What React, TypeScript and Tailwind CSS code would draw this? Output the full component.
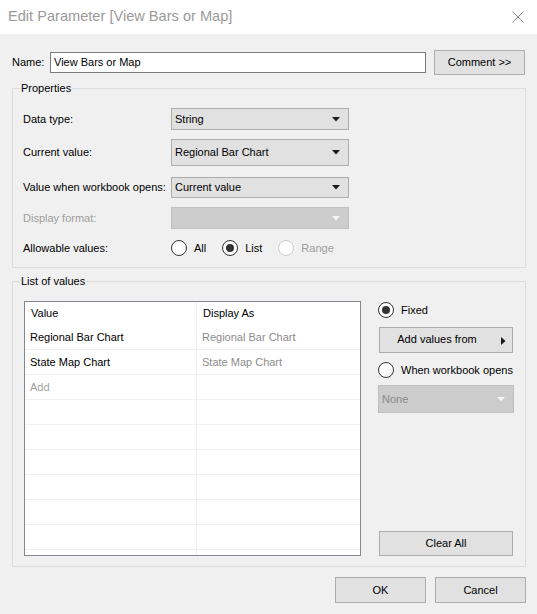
import React from 'react';

const font = { fontFamily: '"Liberation Sans", Arial, sans-serif' };

function Arrow({ disabled = false }: { disabled?: boolean }) {
  return (
    <svg width="8" height="5" viewBox="0 0 8 5" className="shrink-0">
      <path d="M0 0H8L4 4.5Z" fill={disabled ? '#f4f4f4' : '#1b1b1b'} />
    </svg>
  );
}

function Select({ value, h, disabled = false, w = 'w-[178px]' }: { value?: string; h: string; disabled?: boolean; w?: string }) {
  return (
    <div
      className={`${w} ${h} flex items-center justify-between pl-[3px] pr-[8px] border ${
        disabled ? 'bg-[#cccccc] border-[#bfbfbf] text-[#8a8a8a]' : 'bg-[#e1e1e1] border-[#adadad] text-black'
      }`}
    >
      <span>{value}</span>
      <Arrow disabled={disabled} />
    </div>
  );
}

function Radio({ label, checked = false, disabled = false }: { label: string; checked?: boolean; disabled?: boolean }) {
  return (
    <div className="flex items-center gap-[7px]">
      <span
        className={`w-[16px] h-[16px] rounded-full border bg-white flex items-center justify-center ${
          disabled ? 'border-[#cccccc]' : 'border-[#333333]'
        }`}
      >
        {checked && <span className="w-[8px] h-[8px] rounded-full bg-[#333333]" />}
      </span>
      <span className={disabled ? 'text-[#9d9d9d]' : 'text-black'}>{label}</span>
    </div>
  );
}

function Button({ children, w, h = 'h-[26px]', className = '' }: { children: React.ReactNode; w: string; h?: string; className?: string }) {
  return (
    <div className={`${w} ${h} bg-[#e1e1e1] border border-[#adadad] flex items-center justify-center text-black ${className}`}>
      {children}
    </div>
  );
}

const rows = [
  { value: 'Regional Bar Chart', display: 'Regional Bar Chart' },
  { value: 'State Map Chart', display: 'State Map Chart' },
  { value: 'Add', display: '', muted: true },
  ...Array.from({ length: 7 }, () => ({ value: '', display: '' })),
];

export default function App() {
  return (
    <div className="w-[537px] h-[614px] bg-[#f0f0f0] text-[11px] overflow-hidden" style={font}>
      {/* title bar */}
      <div className="h-[34px] bg-white flex items-center justify-between pl-[8px] pr-[13px]">
        <span className="text-[14.6px] text-[#9a9a9a]">Edit Parameter [View Bars or Map]</span>
        <svg width="12" height="12" viewBox="0 0 12 12">
          <path d="M0.5 0.5L11.5 11.5M11.5 0.5L0.5 11.5" stroke="#8c8c8c" strokeWidth="1" />
        </svg>
      </div>

      <div className="pl-[12px] pr-[11px]">
        {/* name row */}
        <div className="mt-[16px] h-[25px] flex items-center">
          <span className="w-[38px]">Name:</span>
          <div className="w-[376px] h-[21px] bg-white border border-[#7a7a7a] flex items-center pl-[3px]">View Bars or Map</div>
          <Button w="w-[91px]" h="h-[25px]" className="ml-[8px]">Comment &gt;&gt;</Button>
        </div>

        {/* properties */}
        <fieldset className="mt-[6px] w-[514px] border border-[#dcdcdc] pl-[10px] pt-[13px] pb-[11px]">
          <legend className="ml-[-3px] px-[1px] leading-[14px]">Properties</legend>
          <div className="flex items-center h-[22px]">
            <span className="w-[148px]">Data type:</span>
            <Select value="String" h="h-[22px]" />
          </div>
          <div className="flex items-center h-[27px] mt-[9px]">
            <span className="w-[148px]">Current value:</span>
            <Select value="Regional Bar Chart" h="h-[27px]" />
          </div>
          <div className="flex items-center h-[21px] mt-[11px]">
            <span className="w-[148px]">Value when workbook opens:</span>
            <Select value="Current value" h="h-[21px]" />
          </div>
          <div className="flex items-center h-[22px] mt-[9px]">
            <span className="w-[148px] text-[#9d9d9d]">Display format:</span>
            <Select h="h-[22px]" disabled />
          </div>
          <div className="flex items-center h-[16px] mt-[11px]">
            <span className="w-[148px]">Allowable values:</span>
            <div className="flex items-center gap-[16px]">
              <Radio label="All" />
              <Radio label="List" checked />
              <Radio label="Range" disabled />
            </div>
          </div>
        </fieldset>

        {/* list of values */}
        <fieldset className="mt-[6px] w-[514px] border border-[#dcdcdc] pl-[11px] pt-[13px] pb-[10px]">
          <legend className="ml-[-4px] px-[1px] leading-[14px]">List of values</legend>
          <div className="flex">
            <div className="w-[337px] h-[255px] bg-white border border-[#828790] overflow-hidden">
              <div className="flex h-[23px] items-center">
                <div className="w-[172px] h-full border-r border-[#f0f0f0] flex items-center pl-[6px]">Value</div>
                <div className="flex-1 h-full flex items-center pl-[6px]">Display As</div>
              </div>
              {rows.map((r, i) => (
                <div key={i} className="flex h-[25px] border-b border-[#f0f0f0]">
                  <div className={`w-[172px] h-full border-r border-[#f0f0f0] flex items-center pl-[5px] ${r.muted ? 'text-[#a0a0a0]' : 'text-black'}`}>
                    {r.value}
                  </div>
                  <div className="flex-1 h-full flex items-center pl-[5px] text-[#8c8c8c]">{r.display}</div>
                </div>
              ))}
            </div>

            <div className="ml-[17px] w-[136px] flex flex-col pt-[1px]">
              <Radio label="Fixed" checked />
              <Button w="w-[134px]" className="mt-[8px] ml-[1px] pr-[18px] relative">
                <span>Add values from</span>
                <svg width="5" height="8" viewBox="0 0 5 8" className="absolute right-[6px] top-[9px]">
                  <path d="M0 0L4.5 4L0 8Z" fill="#1b1b1b" />
                </svg>
              </Button>
              <div className="mt-[9px]">
                <Radio label="When workbook opens" />
              </div>
              <div className="mt-[7px]">
                <Select value="None" h="h-[28px]" w="w-[136px]" disabled />
              </div>
              <Button w="w-[134px]" h="h-[25px]" className="mt-auto ml-[1px]">Clear All</Button>
            </div>
          </div>
        </fieldset>

        {/* footer */}
        <div className="mt-[10px] flex justify-end gap-[9px] w-[514px]">
          <Button w="w-[91px]">OK</Button>
          <Button w="w-[91px]">Cancel</Button>
        </div>
      </div>
    </div>
  );
}
